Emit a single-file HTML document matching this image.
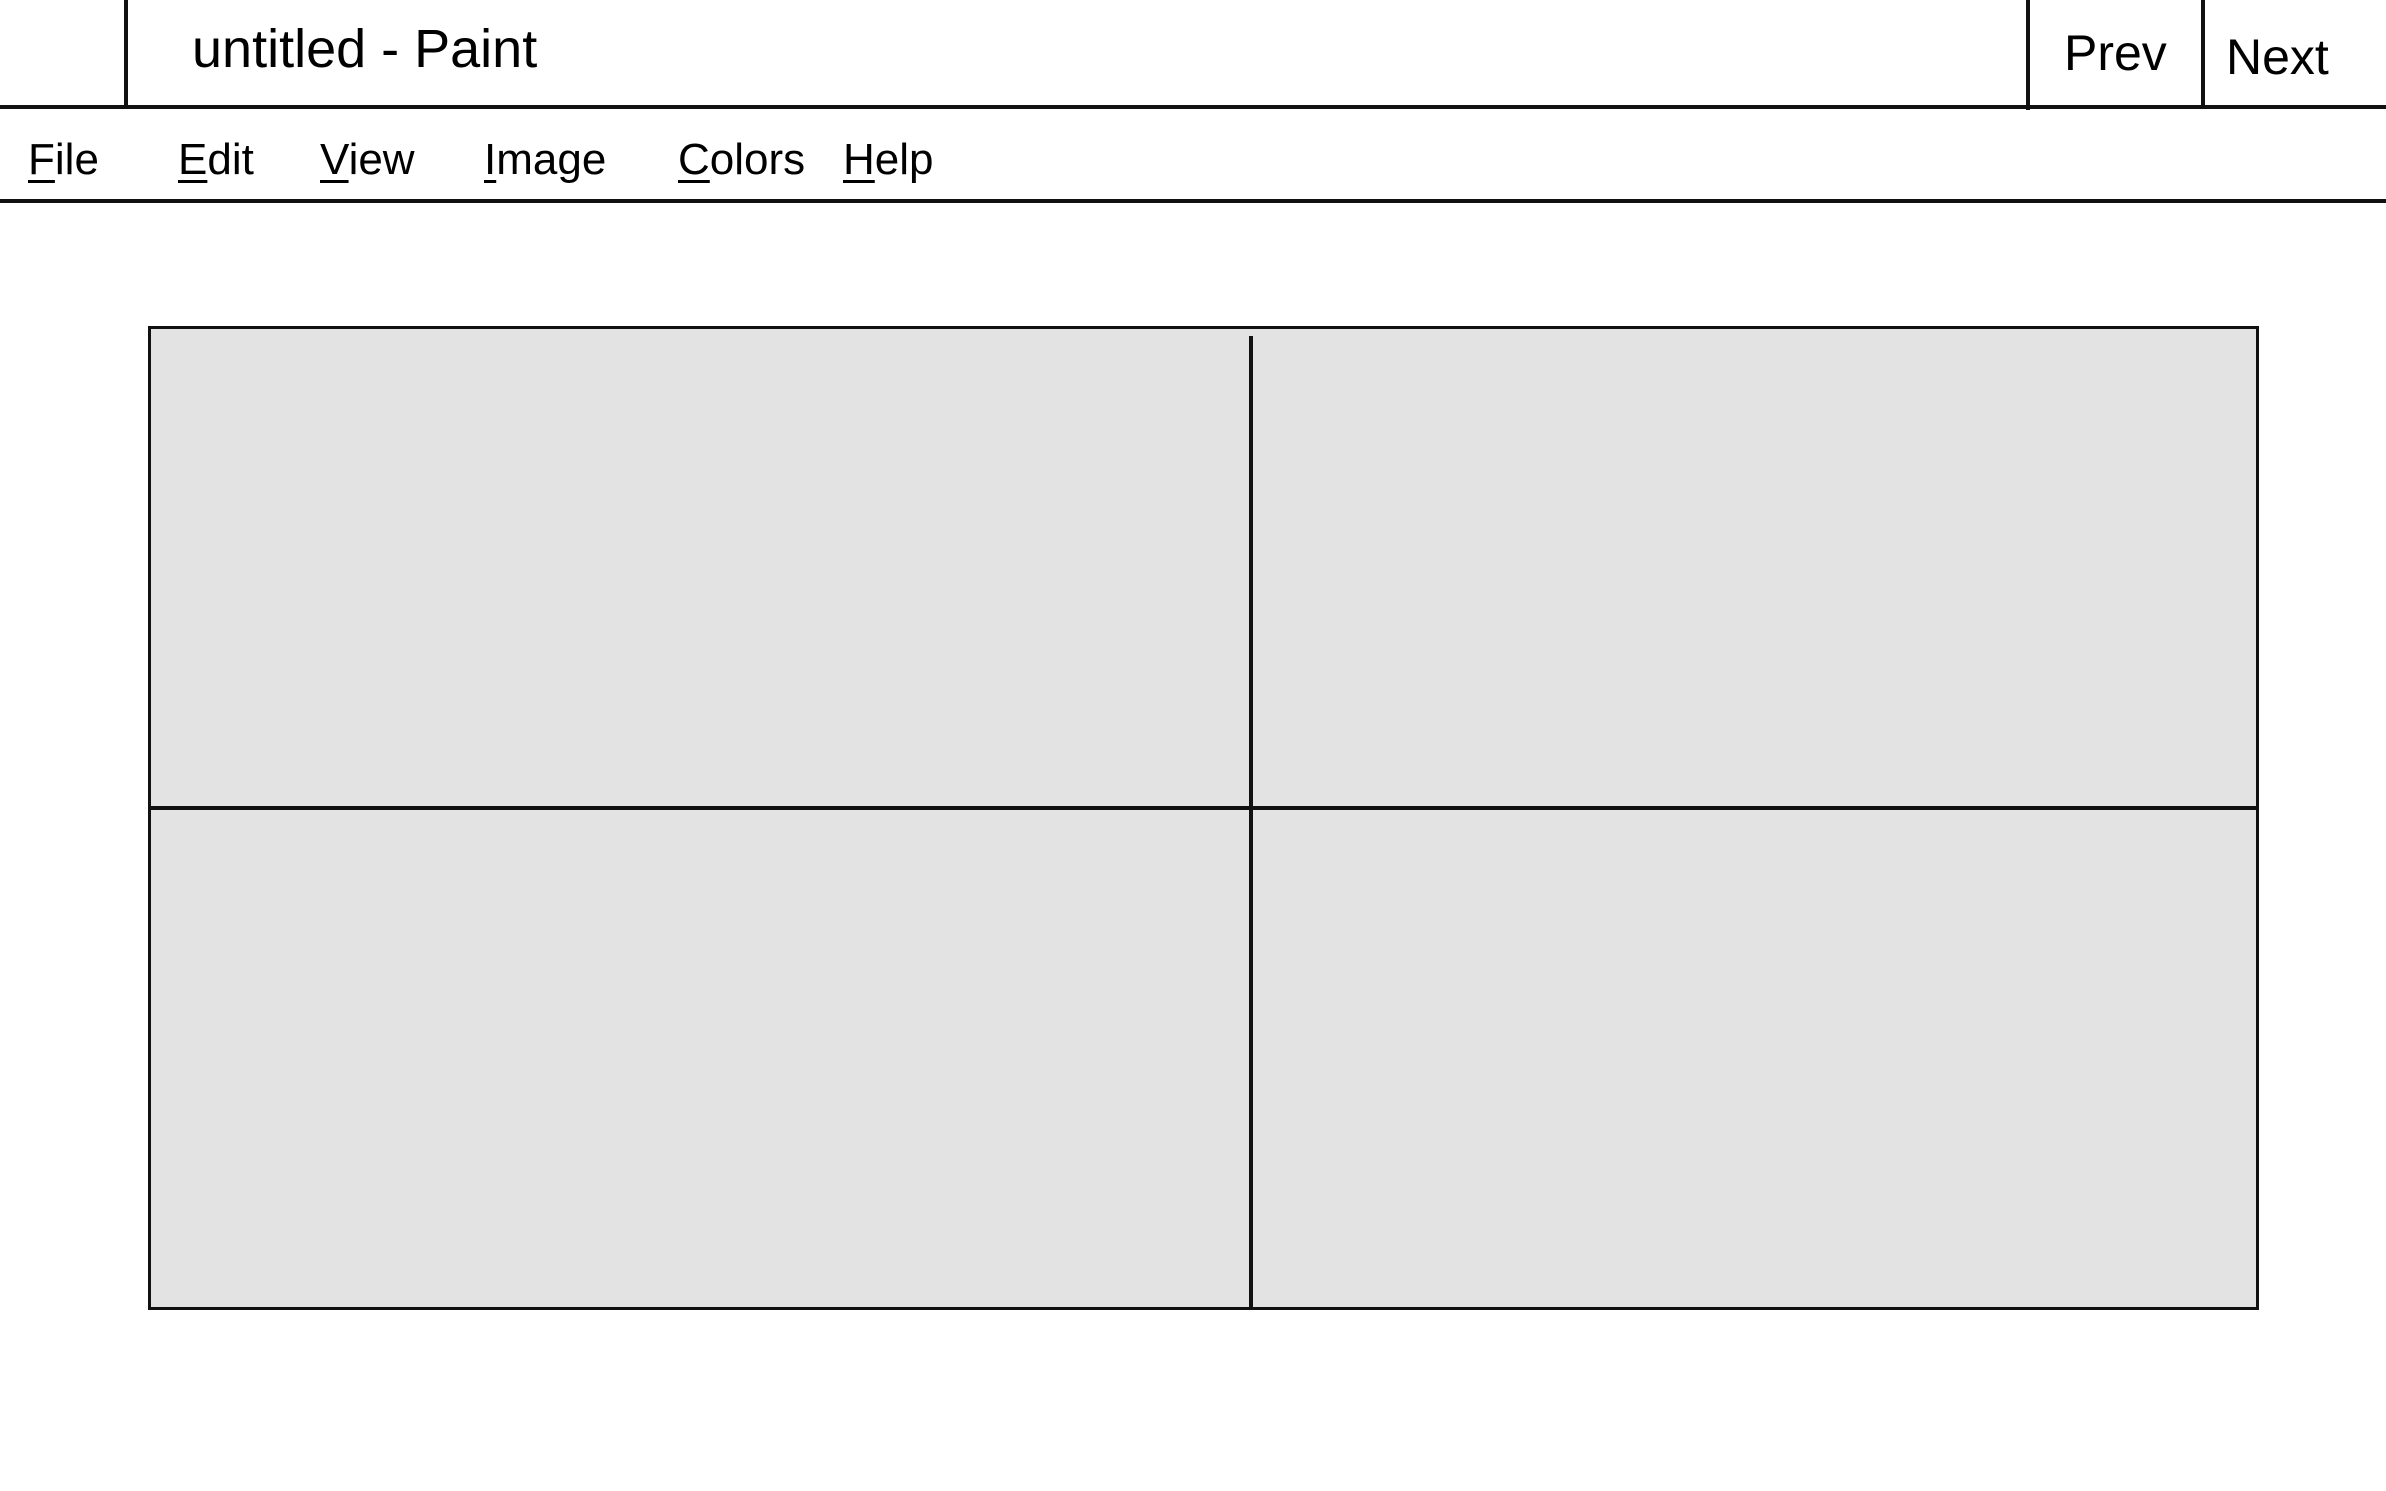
<!DOCTYPE html>
<html><head><meta charset="utf-8"><style>
html,body{margin:0;padding:0;background:#fff;}
body{width:2386px;height:1491px;position:relative;overflow:hidden;font-family:"Liberation Sans",sans-serif;color:#000;}
.l{position:absolute;background:#111;}
.t{position:absolute;white-space:nowrap;line-height:1;}
.m{position:absolute;font-size:44px;line-height:1;top:138px;}
.m u{text-decoration-thickness:3px;text-underline-offset:6px;}
</style></head><body>
<div class="l" style="left:0;top:105px;width:2386px;height:4px"></div>
<div class="l" style="left:124px;top:0;width:4px;height:107px"></div>
<div class="l" style="left:2026px;top:0;width:4px;height:110px"></div>
<div class="l" style="left:2201px;top:0;width:4px;height:107px"></div>
<div class="l" style="left:0;top:199px;width:2386px;height:4px"></div>
<div class="t" style="left:192px;top:22px;font-size:54px;">untitled - Paint</div>
<div class="t" style="left:2064px;top:28px;font-size:50px;">Prev</div>
<div class="t" style="left:2226px;top:32px;font-size:50px;">Next</div>
<div class="m" style="left:28px"><u>F</u>ile</div>
<div class="m" style="left:178px"><u>E</u>dit</div>
<div class="m" style="left:320px"><u>V</u>iew</div>
<div class="m" style="left:484px"><u>I</u>mage</div>
<div class="m" style="left:678px"><u>C</u>olors</div>
<div class="m" style="left:843px"><u>H</u>elp</div>
<div style="position:absolute;left:148px;top:326px;width:2111px;height:984px;background:#e3e3e3;border:3px solid #111;box-sizing:border-box"></div>
<div class="l" style="left:1249px;top:336px;width:4px;height:974px"></div>
<div class="l" style="left:148px;top:806px;width:2111px;height:4px"></div>
</body></html>
